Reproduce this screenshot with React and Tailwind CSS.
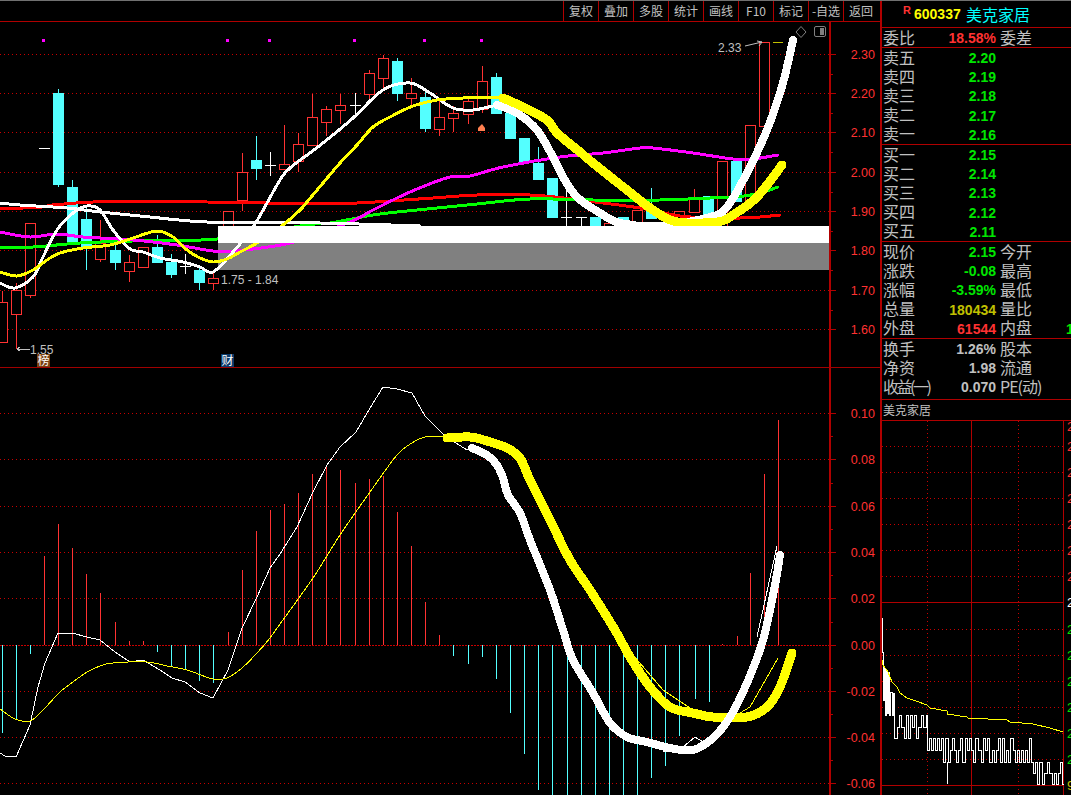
import React from 'react';

const RED = '#ff3232';
const CYAN = '#54ffff';
const GRID = '#b00000';
const DOT = '#c80000';
const GREY = '#c0c0c0';
const LATIN = '"Liberation Sans", Arial, sans-serif';
const CJK = '"Noto Sans CJK SC", sans-serif';

const tools = ['复权', '叠加', '多股', '统计', '画线', 'F10', '标记', '-自选', '返回'];

// candles: x, high, body top, body bottom, low, kind (r = hollow red, c = cyan, w = doji)
const candles = [
  [2, 291, 302, 342, 342, 'r'], [16, 283, 290, 314, 349, 'r'], [30, 223, 223, 295, 298, 'r'],
  [44, 148, 148, 148, 148, 'w'], [58, 89, 93, 184, 187, 'c'], [72, 180, 187, 243, 243, 'c'],
  [86, 207, 219, 247, 270, 'c'], [100, 220, 243, 259, 262, 'r'], [115, 245, 250, 262, 270, 'c'],
  [129, 255, 262, 271, 282, 'r'], [143, 247, 247, 267, 267, 'r'], [157, 235, 247, 262, 262, 'c'],
  [171, 254, 262, 274, 278, 'c'], [185, 254, 266, 266, 274, 'w'], [199, 266, 270, 282, 290, 'c'],
  [213, 273, 278, 283, 290, 'r'], [228, 211, 211, 228, 228, 'r'], [242, 153, 172, 200, 211, 'r'],
  [256, 136, 160, 168, 180, 'c'], [270, 152, 165, 165, 176, 'w'], [284, 125, 164, 169, 169, 'r'],
  [298, 133, 144, 161, 172, 'r'], [312, 94, 117, 145, 145, 'r'], [326, 106, 109, 122, 136, 'r'],
  [340, 94, 105, 110, 124, 'r'], [355, 93, 105, 105, 117, 'w'], [369, 70, 73, 94, 100, 'r'],
  [383, 55, 58, 78, 90, 'r'], [397, 58, 61, 93, 101, 'c'], [411, 78, 93, 98, 105, 'r'],
  [425, 92, 97, 128, 132, 'c'], [439, 100, 117, 129, 136, 'r'], [453, 106, 113, 118, 132, 'r'],
  [468, 97, 101, 114, 124, 'r'], [482, 66, 81, 109, 113, 'r'], [496, 73, 77, 113, 113, 'c'],
  [510, 113, 113, 138, 138, 'c'], [524, 138, 138, 162, 162, 'c'], [538, 147, 163, 179, 179, 'c'],
  [552, 178, 178, 217, 217, 'c'], [566, 190, 217, 217, 226, 'w'], [581, 217, 217, 217, 226, 'w'],
  [595, 217, 217, 225, 225, 'c'], [609, 223, 223, 228, 228, 'r'], [623, 217, 217, 228, 228, 'c'],
  [637, 210, 210, 228, 228, 'r'], [651, 188, 210, 218, 218, 'c'], [679, 211, 211, 228, 228, 'r'],
  [694, 189, 197, 212, 212, 'r'], [708, 196, 196, 228, 228, 'c'], [722, 161, 161, 228, 228, 'r'],
  [736, 161, 161, 201, 201, 'c'], [750, 125, 125, 202, 202, 'r'], [764, 42, 42, 126, 126, 'r'],
];

const maWhiteFlat = [[0, 203], [20, 205], [67, 208], [100, 212], [150, 217], [207, 222], [320, 223], [420, 226]];
const maRed = [[0, 209], [42, 207], [52, 205], [93, 202], [137, 201], [207, 202], [267, 203], [300, 204], [357, 203], [433, 198], [477, 195], [530, 195], [573, 199], [587, 201], [640, 208], [680, 216], [717, 218], [740, 218], [760, 217], [780, 215]];
const maGreen = [[0, 247], [33, 247], [80, 243], [133, 241], [217, 239], [307, 225], [330, 223], [373, 215], [397, 212], [437, 208], [477, 204], [530, 199], [593, 200], [660, 200], [710, 198], [737, 197], [760, 193], [778, 187]];
const maMagenta = [[0, 232], [30, 237], [57, 234], [83, 237], [133, 240], [177, 245], [213, 251], [233, 251], [290, 243], [350, 222], [373, 210], [410, 192], [450, 177], [470, 176], [503, 167], [560, 157], [603, 153], [640, 148], [653, 148], [693, 153], [733, 159], [753, 159], [778, 155]];
const whiteThin = [[0, 283], [15, 288], [33, 277], [43, 257], [57, 230], [73, 213], [87, 206], [100, 210], [113, 230], [130, 249], [143, 252], [160, 258], [183, 262], [200, 267], [213, 272], [233, 252], [253, 227], [267, 203], [280, 180], [290, 168], [323, 143], [353, 118], [383, 90], [410, 83], [430, 93], [453, 108], [473, 110], [497, 105]];
const whiteThick = [[497, 105], [517, 113], [537, 130], [553, 157], [563, 177], [577, 197], [600, 213], [620, 223], [660, 226], [710, 217], [727, 207], [747, 173], [767, 130], [780, 93], [787, 67], [793, 40]];
const yellowThin = [[0, 272], [17, 276], [33, 270], [47, 260], [60, 253], [83, 248], [110, 245], [133, 238], [157, 231], [173, 237], [187, 250], [200, 258], [213, 262], [227, 259], [240, 252], [257, 243], [283, 225], [300, 210], [307, 202], [323, 183], [340, 163], [357, 145], [373, 127], [390, 117], [413, 106], [437, 100], [463, 98], [483, 97], [500, 98]];
const yellowThick = [[503, 98], [523, 107], [547, 120], [557, 133], [580, 152], [593, 163], [627, 190], [653, 210], [677, 222], [717, 222], [733, 215], [757, 197], [782, 165]];

const markers = [43, 227, 269, 354, 424, 481];
const priceTicks = [[54, '2.30'], [93, '2.20'], [132, '2.10'], [172, '2.00'], [211, '1.90'], [250, '1.80'], [290, '1.70'], [329, '1.60']];

// MACD bars: x, end of the bar (base line is y=645)
const macdBars = [
  [2, 733], [16, 719], [30, 654], [44, 556], [58, 524], [72, 548], [86, 574], [100, 593], [115, 622], [129, 641],
  [143, 641], [157, 652], [171, 667], [185, 669], [199, 681], [213, 683], [228, 632], [242, 570], [256, 531],
  [270, 510], [284, 504], [298, 493], [312, 474], [326, 467], [340, 470], [355, 483], [369, 479], [383, 476],
  [397, 512], [411, 546], [425, 602], [439, 635], [453, 656], [468, 664], [482, 657], [496, 679], [510, 713],
  [524, 754], [538, 790], [552, 795], [567, 795], [581, 795], [595, 795], [609, 795], [623, 795], [637, 795],
  [651, 778], [665, 766], [679, 736], [695, 699], [709, 702], [722, 644], [737, 636], [750, 573], [764, 474], [778, 420],
];
const macdTicks = [[413, '0.10'], [459, '0.08'], [506, '0.06'], [552, '0.04'], [598, '0.02'], [645, '0.00'], [691, '-0.02'], [737, '-0.04'], [783, '-0.06']];

const difThin = [[0, 753], [5, 756], [16, 757], [30, 725], [38, 687], [45, 663], [58, 633], [72, 633], [87, 637], [100, 640], [115, 652], [130, 662], [143, 660], [160, 670], [172, 678], [185, 682], [200, 693], [213, 698], [228, 670], [242, 628], [257, 597], [270, 568], [280, 554], [297, 527], [313, 492], [327, 465], [340, 447], [356, 432], [370, 408], [383, 387], [397, 389], [412, 393], [425, 416], [445, 436], [467, 450], [480, 448]];
const difThick = [[472, 448], [487, 455], [497, 465], [503, 478], [508, 495], [520, 513], [530, 540], [550, 590], [563, 630], [573, 660], [593, 693], [610, 723], [627, 737], [647, 742], [670, 748], [693, 750], [713, 738], [730, 717], [747, 683], [763, 640], [775, 585], [780, 555]];
const deaThin = [[0, 709], [15, 719], [30, 721], [43, 710], [60, 692], [73, 682], [87, 672], [100, 666], [113, 663], [147, 662], [167, 666], [187, 670], [213, 679], [227, 678], [242, 668], [257, 653], [270, 638], [280, 624], [313, 578], [340, 535], [370, 492], [397, 455], [412, 443], [425, 437], [445, 436]];
const deaThick = [[447, 438], [470, 437], [487, 441], [507, 448], [520, 458], [530, 480], [550, 520], [570, 560], [590, 590], [615, 630], [630, 657], [650, 687], [670, 707], [693, 713], [713, 717], [747, 717], [767, 707], [780, 687], [792, 653]];
const yellowHint = [[633, 655], [663, 690], [693, 710]];
const yellowHint2 = [[740, 713], [750, 707], [778, 658]];
const whiteHint = [[663, 752], [683, 747], [695, 737], [703, 742]];
const whiteHint2 = [[757, 637], [777, 546]];

const miniAvg = [[881, 602], [881, 650], [882, 660], [883, 665], [888, 672], [892, 682], [897, 687], [900, 693], [907, 698], [913, 700], [927, 705], [930, 708], [947, 711], [947, 714], [967, 717], [968, 718], [1007, 720], [1010, 722], [1033, 724], [1050, 728], [1063, 732]];
const miniGrid = Array.from({ length: 15 }, (_, i) => Math.round(420 + i * 26.07));

// tick price line of the mini chart: a step line hopping between levels
const buildTickPath = () => {
  let seed = 91;
  const rnd = () => {
    seed = (seed * 1103 + 12345) % 65536;
    return seed / 65536;
  };
  let d = 'M881.5 602V618H882.5V652H883.5V700H884.5V668H885.5V715H886.5V670H887.5V713H888.5V672H889.5V715H890.5V692H892.5V715H893.5V693H894.5V715';
  const bands = [
    [895.5, 927.5, [715, 727, 738]],
    [927.5, 1033.5, [738, 750, 762]],
    [1033.5, 1063.5, [762, 773, 784]],
  ];
  bands.forEach(([from, to, levels]) => {
    let x = from;
    let last = 0;
    while (x < to) {
      // hop to another level, mostly a full or half swing
      const level = (last + 1 + Math.floor(rnd() * 2)) % 3;
      last = level;
      x += rnd() > 0.8 ? 3 : 2;
      d += `V${levels[level]}H${Math.min(x, to)}`;
    }
  });
  d += 'M947.5 762V784';
  return d;
};
const tickPath = buildTickPath();

// catmull-rom through the points so that the thick pen lines come out round
const smoothPath = (pts) => {
  let d = `M${pts[0][0]} ${pts[0][1]}`;
  for (let i = 0; i < pts.length - 1; i++) {
    const p0 = pts[i - 1] || pts[i];
    const p1 = pts[i];
    const p2 = pts[i + 1];
    const p3 = pts[i + 2] || p2;
    const c1x = p1[0] + (p2[0] - p0[0]) / 6;
    const c1y = p1[1] + (p2[1] - p0[1]) / 6;
    const c2x = p2[0] - (p3[0] - p1[0]) / 6;
    const c2y = p2[1] - (p3[1] - p1[1]) / 6;
    d += `C${c1x} ${c1y} ${c2x} ${c2y} ${p2[0]} ${p2[1]}`;
  }
  return d;
};

const Line = ({ pts, color, width, smooth }) => (
  <path
    d={smooth ? smoothPath(pts) : `M${pts.map((p) => p.join(' ')).join('L')}`}
    fill="none"
    stroke={color}
    strokeWidth={width}
    strokeLinejoin="round"
    strokeLinecap="round"
    shapeRendering="crispEdges"
  />
);

const Axis = ({ top, bottom, ticks }) => {
  const small = [];
  for (let i = 0; i < ticks.length - 1; i++) small.push((ticks[i][0] + ticks[i + 1][0]) / 2);
  return (
    <g shapeRendering="crispEdges">
      <line x1="830" y1={top} x2="830" y2={bottom} stroke={GRID} strokeWidth="2" />
      {ticks.map(([y, label]) => (
        <g key={label}>
          <line
            x1="0"
            y1={y + 0.5}
            x2="829"
            y2={y + 0.5}
            stroke={DOT}
            strokeDasharray={label === '0.00' ? '2 1' : '1 3'}
          />
          <line x1="830" y1={y + 0.5} x2="836" y2={y + 0.5} stroke={GRID} />
          <text x="875" y={y + 5} textAnchor="end" fill={RED} fontSize="12.5" fontFamily={LATIN}>{label}</text>
        </g>
      ))}
      {small.map((y) => (
        <line key={y} x1="830" y1={y + 0.5} x2="833" y2={y + 0.5} stroke={GRID} />
      ))}
    </g>
  );
};

const Candle = ({ c }) => {
  const [x, hi, top, bot, lo, kind] = c;
  const color = kind === 'r' ? RED : kind === 'c' ? CYAN : '#ffffff';
  return (
    <g shapeRendering="crispEdges">
      <line x1={x + 0.5} y1={hi} x2={x + 0.5} y2={lo} stroke={color} />
      {kind === 'w' ? (
        <line x1={x - 5} y1={top + 0.5} x2={x + 6} y2={top + 0.5} stroke={color} />
      ) : (
        <rect
          x={x - 4.5}
          y={top + 0.5}
          width="10"
          height={bot - top}
          fill={kind === 'c' ? CYAN : '#000000'}
          stroke={color}
        />
      )}
    </g>
  );
};

const PriceChart = () => (
  <svg className="block h-[345px] w-[880px]" viewBox="0 22 880 345">
    <Axis top={22} bottom={367} ticks={priceTicks} />
    {candles.map((c) => (
      <Candle key={c[0]} c={c} />
    ))}
    <line x1="773" y1="42.5" x2="783" y2="42.5" stroke="#c0c000" shapeRendering="crispEdges" />
    <rect x="218" y="243" width="611" height="27" fill="#808080" />
    <Line pts={maRed} color="#ff0000" width={3} smooth />
    <Line pts={maGreen} color="#00ff00" width={3} smooth />
    <Line pts={maMagenta} color="#ff00ff" width={3} smooth />
    <Line pts={maWhiteFlat} color="#ffffff" width={3} smooth />
    <Line pts={whiteThin} color="#ffffff" width={3} smooth />
    <Line pts={yellowThin} color="#ffff00" width={3} smooth />
    <Line pts={whiteThick} color="#ffffff" width={8} smooth />
    <Line pts={yellowThick} color="#ffff00" width={9} smooth />
    <rect x="218" y="226" width="611" height="17" fill="#ffffff" />
    {markers.map((x) => (
      <rect key={x} x={x - 1} y="39" width="3" height="3" fill="#ff00ff" />
    ))}
    <path d="M482 124l-4 4v3h7v-3z" fill="#ff8050" />
    <text x="718" y="52" fill={GREY} fontSize="12" fontFamily={LATIN}>2.33</text>
    <path d="M745 46L762 42M757 41l5 1-3 4" fill="none" stroke={GREY} />
    <path d="M801 26.5l5 5.5-5 5.5-5-5.5z" fill="none" stroke="#808080" />
    <rect x="814.5" y="26.5" width="11" height="10" rx="1.5" fill="none" stroke="#808080" />
    <rect x="820" y="28" width="4" height="7" fill="#808080" />
    <text x="221" y="284" fill={GREY} fontSize="12" fontFamily={LATIN}>1.75 - 1.84</text>
    <path d="M17 349h13M17 349l3-2M17 349l3 2" fill="none" stroke={GREY} shapeRendering="crispEdges" />
    <text x="30" y="354" fill={GREY} fontSize="12" fontFamily={LATIN}>1.55</text>
    <rect x="37" y="354" width="13" height="13" fill="#7a4010" />
    <text x="37.5" y="364.5" fill="#ffffff" fontSize="12" fontFamily={CJK}>榜</text>
    <rect x="221" y="354" width="13" height="13" fill="#0a3a6a" />
    <text x="221.5" y="364.5" fill="#ffffff" fontSize="12" fontFamily={CJK}>财</text>
  </svg>
);

const MacdChart = () => (
  <svg className="block h-[427px] w-[880px]" viewBox="0 368 880 427">
    <Axis top={368} bottom={795} ticks={macdTicks} />
    {macdBars.map(([x, end]) => (
      <line
        key={x}
        x1={x + 0.5}
        y1="645"
        x2={x + 0.5}
        y2={end}
        stroke={end < 645 ? RED : CYAN}
        shapeRendering="crispEdges"
      />
    ))}
    <Line pts={difThin} color="#ffffff" width={1} />
    <Line pts={deaThin} color="#ffff00" width={1} smooth />
    <Line pts={yellowHint} color="#ffff00" width={1} />
    <Line pts={yellowHint2} color="#ffff00" width={1} />
    <Line pts={whiteHint} color="#ffffff" width={1} />
    <Line pts={whiteHint2} color="#ffffff" width={1} />
    <Line pts={deaThick} color="#ffff00" width={9} smooth />
    <Line pts={difThick} color="#ffffff" width={8} smooth />
  </svg>
);

const MiniChart = () => (
  <svg className="block h-[374px] w-[189px]" viewBox="882 421 189 374">
    <g shapeRendering="crispEdges">
      {miniGrid.map((y, i) => {
        const solid = i === 7 || i === 14;
        return (
          <line key={y} x1="882" y1={y + 0.5} x2="1063" y2={y + 0.5} stroke={solid ? GRID : DOT} strokeDasharray={solid ? undefined : '1 3'} />
        );
      })}
      <line x1="927.5" y1="421" x2="927.5" y2="795" stroke={DOT} strokeDasharray="1 3" />
      <line x1="971.5" y1="421" x2="971.5" y2="795" stroke={GRID} />
      <line x1="1018.5" y1="421" x2="1018.5" y2="795" stroke={DOT} strokeDasharray="1 3" />
      <line x1="1063.5" y1="421" x2="1063.5" y2="795" stroke={GRID} />
    </g>
    <path d={tickPath} fill="none" stroke="#ffffff" shapeRendering="crispEdges" />
    <Line pts={miniAvg} color="#ffff00" width={1} />
    {miniGrid.map((y, i) => (
      <text
        key={y}
        x="1067"
        y={i === 0 ? y + 11 : y + 5}
        fontSize="13"
        fontFamily={LATIN}
        fill={i < 7 ? RED : i === 7 ? '#ffffff' : i === 14 ? '#c0c000' : '#00e600'}
      >
        {i === 14 ? '9' : '2'}
      </text>
    ))}
  </svg>
);

const Row = ({ label, value, color = '#00e600', label2, value2, narrow, narrow2 }) => (
  <div className="flex h-[19.2px] items-center whitespace-nowrap">
    <span className={`mb-[2px] w-[45px] flex-none text-[16px] leading-[16px] text-[#c0c0c0] ${narrow ? 'tracking-[-2.5px]' : ''}`}>
      {label}
    </span>
    <span
      className="mt-[1px] w-[68px] flex-none text-right text-[14px] leading-[14px] font-bold font-['Liberation_Sans']"
      style={{ color }}
    >
      {value}
    </span>
    {label2 && (
      <span className={`mb-[2px] ml-[4px] w-[66px] flex-none text-[16px] leading-[16px] text-[#c0c0c0] ${narrow2 ? 'tracking-[-1px]' : ''}`}>
        {label2}
      </span>
    )}
    {value2 && (
      <span className="mt-[1px] flex-none text-[14px] leading-[14px] font-bold text-[#00e600] font-['Liberation_Sans']">
        {value2}
      </span>
    )}
  </div>
);

const QuotePanel = () => (
  <div className="flex w-[191px] flex-none flex-col overflow-hidden border-l-2 border-[#b00000] font-['Noto_Sans_CJK_SC',sans-serif]">
    <div className="flex h-[27px] flex-none items-center border-b border-[#b00000] pl-[21px]">
      <span className="mb-[7px] w-[11px] text-[11px] leading-[11px] font-bold text-[#ff3232] font-['Liberation_Sans']">R</span>
      <span className="w-[52px] text-[14px] leading-[14px] font-bold text-[#ffff00] font-['Liberation_Sans']">600337</span>
      <span className="text-[16px] leading-[16px] text-[#00ffff]">美克家居</span>
    </div>
    <div className="h-[20px] flex-none border-b border-[#b00000] pl-[1px]">
      <Row label="委比" value="18.58%" color={RED} label2="委差" />
    </div>
    <div className="h-[97px] flex-none border-b border-[#b00000] pl-[1px]">
      <Row label="卖五" value="2.20" />
      <Row label="卖四" value="2.19" />
      <Row label="卖三" value="2.18" />
      <Row label="卖二" value="2.17" />
      <Row label="卖一" value="2.16" />
    </div>
    <div className="h-[97px] flex-none border-b border-[#b00000] pl-[1px]">
      <Row label="买一" value="2.15" />
      <Row label="买二" value="2.14" />
      <Row label="买三" value="2.13" />
      <Row label="买四" value="2.12" />
      <Row label="买五" value="2.11" />
    </div>
    <div className="h-[97px] flex-none border-b border-[#b00000] pl-[1px]">
      <Row label="现价" value="2.15" label2="今开" />
      <Row label="涨跌" value="-0.08" label2="最高" />
      <Row label="涨幅" value="-3.59%" label2="最低" />
      <Row label="总量" value="180434" color="#c0c000" label2="量比" />
      <Row label="外盘" value="61544" color={RED} label2="内盘" value2="1" />
    </div>
    <div className="h-[61px] flex-none border-b border-[#b00000] pl-[1px]">
      <Row label="换手" value="1.26%" color={GREY} label2="股本" />
      <Row label="净资" value="1.98" color={GREY} label2="流通" />
      <Row label="收益(一)" value="0.070" color={GREY} label2="PE(动)" narrow narrow2 />
    </div>
    <div className="flex h-[21px] flex-none items-center border-b border-[#b00000] pl-[1px] text-[12px] text-[#c0c0c0]">
      美克家居
    </div>
    <MiniChart />
  </div>
);

export default function App() {
  return (
    <div className="flex h-[795px] w-[1071px] flex-col overflow-hidden bg-black">
      <div className="h-px flex-none bg-[#707070]" />
      <div className="flex min-h-0 flex-1">
        <div className="w-[880px] flex-none">
          <div className="flex h-[21px] justify-end border-b border-[#b00000] pr-[2px]">
            {tools.map((t) => (
              <div
                key={t}
                className="flex w-[35px] items-center justify-center border-l border-[#b00000] text-[12px] text-[#c0c0c0] font-['Noto_Sans_CJK_SC',sans-serif]"
              >
                {t}
              </div>
            ))}
          </div>
          <PriceChart />
          <div className="h-px bg-[#a00000]" />
          <MacdChart />
        </div>
        <QuotePanel />
      </div>
    </div>
  );
}
